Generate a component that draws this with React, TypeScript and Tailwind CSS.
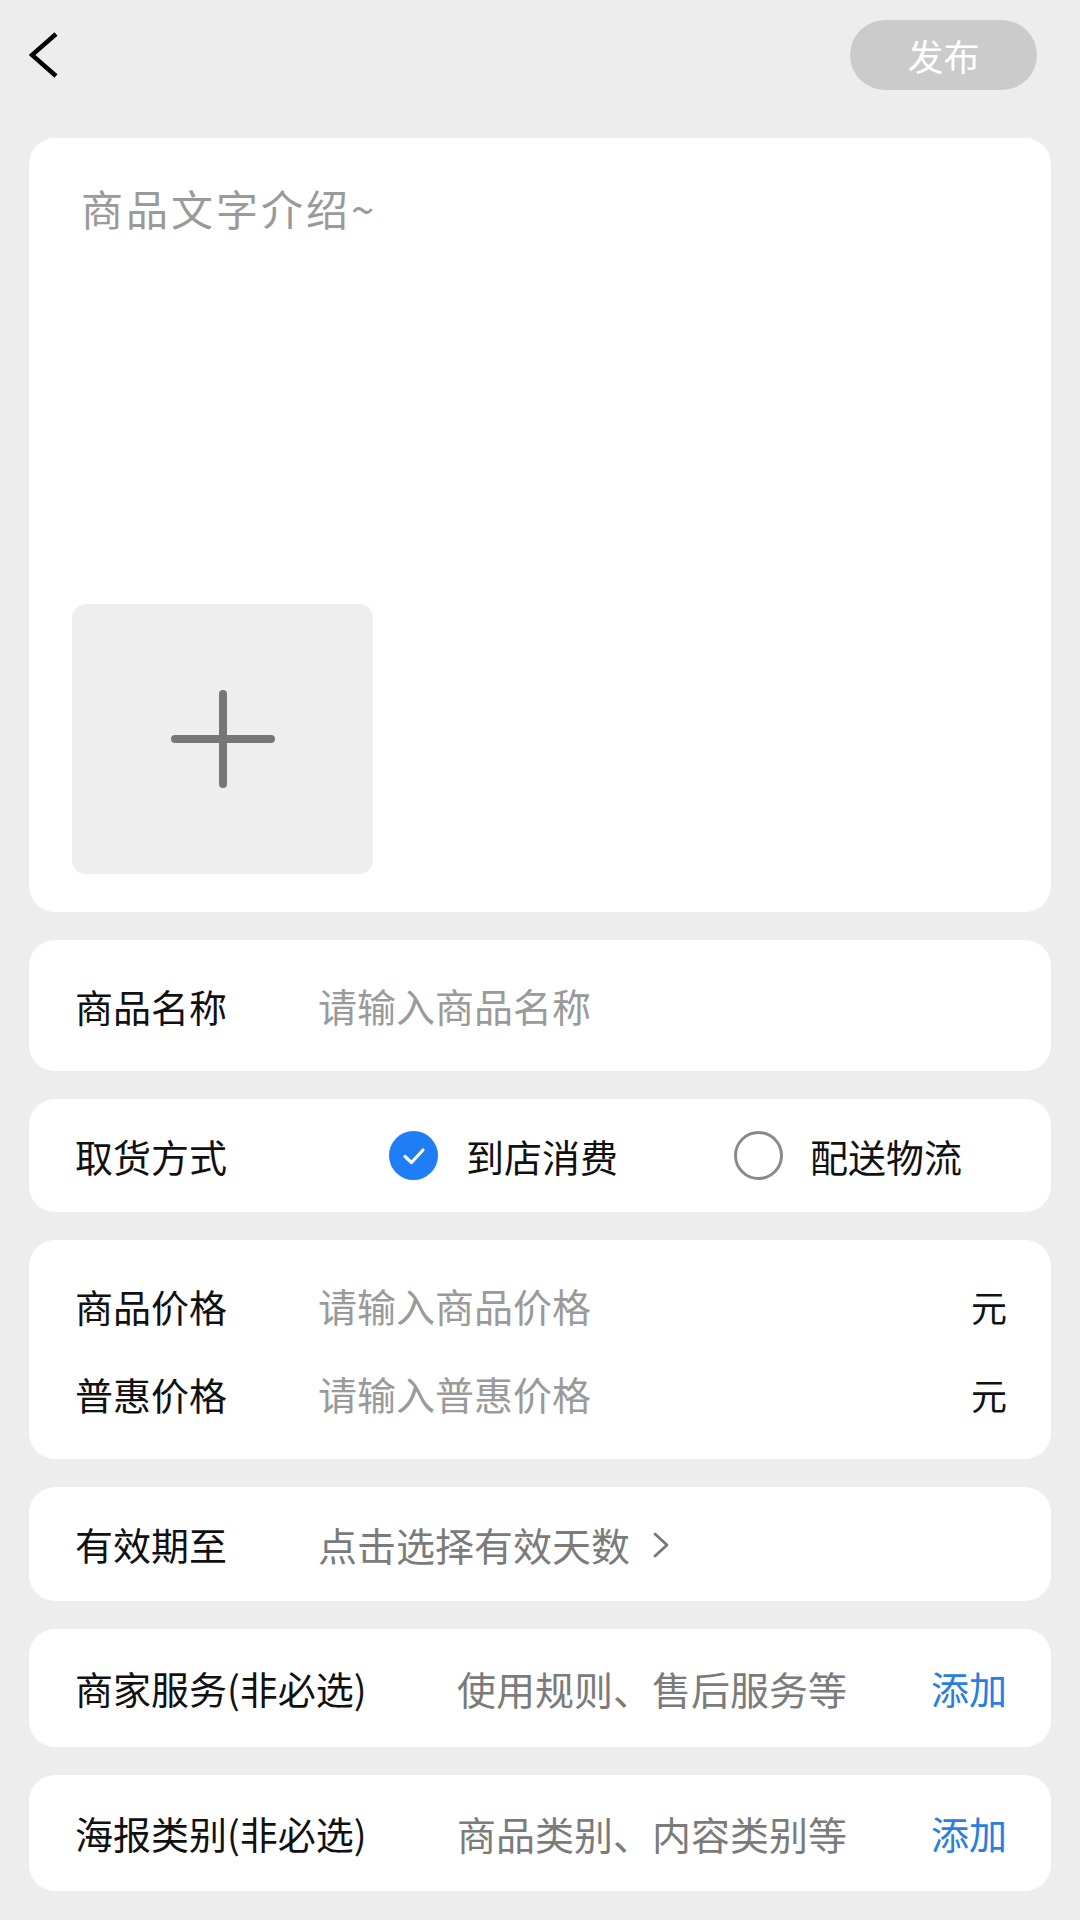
import type { ReactNode } from 'react';

const font = { fontFamily: '"Noto Sans CJK SC", "Noto Sans", sans-serif' };

function Card({ h, className = '', children }: { h: string; className?: string; children: ReactNode }) {
  return (
    <div className={`mx-[29px] rounded-[26px] bg-white pl-[46px] pr-[44px] ${h} ${className}`}>
      {children}
    </div>
  );
}

function Label({ w, children }: { w: string; children: ReactNode }) {
  return <div className={`${w} shrink-0 text-[38px] leading-none text-[#111]`}>{children}</div>;
}

function BackIcon() {
  return (
    <svg width="30" height="46" viewBox="0 0 30 46" fill="none">
      <path d="M27 2 L3 23 L27 44" stroke="#000" strokeWidth="4.5" strokeLinejoin="miter" />
    </svg>
  );
}

function ChevronRight() {
  return (
    <svg width="18" height="26" viewBox="0 0 18 26" fill="none">
      <path d="M3 2 L15 13 L3 24" stroke="#777" strokeWidth="2.8" strokeLinecap="round" strokeLinejoin="round" />
    </svg>
  );
}

function PlusIcon() {
  return (
    <svg width="108" height="98" viewBox="0 0 108 98" fill="none">
      <path d="M6 49 H102 M54 4 V94" stroke="#777" strokeWidth="8" strokeLinecap="round" />
    </svg>
  );
}

function Checked() {
  return (
    <div className="flex h-[49px] w-[49px] shrink-0 items-center justify-center rounded-full bg-[#1f7ef5]">
      <svg width="26" height="22" viewBox="0 0 26 22" fill="none">
        <path d="M4 11.5 L10.5 17.5 L22 5" stroke="#fff" strokeWidth="3.2" strokeLinecap="round" strokeLinejoin="round" />
      </svg>
    </div>
  );
}

function Unchecked() {
  return <div className="h-[49px] w-[49px] shrink-0 rounded-full border-[3px] border-[#8a8a8a]" />;
}

export default function App() {
  return (
    <div className="min-h-[1920px] w-[1080px] bg-[#ededed] pb-[27px]" style={font}>
      {/* header */}
      <div className="flex h-[90px] items-center justify-between pl-[29px] pr-[43px] pt-[20px]">
        <BackIcon />
        <button className="flex h-[70px] w-[187px] items-center justify-center rounded-full bg-[#cbcbcb] text-[36px] leading-none text-white">
          发布
        </button>
      </div>

      <div className="mt-[48px] flex flex-col gap-[28px]">
        {/* description + image */}
        <div className="mx-[29px] flex h-[774px] flex-col justify-between rounded-[26px] bg-white pb-[38px] pl-[43px] pt-[49px]">
          <div className="ml-[9px] text-[42px] leading-none tracking-[3px] text-[#9a9a9a]">商品文字介绍~</div>
          <div className="flex h-[270px] w-[301px] items-center justify-center rounded-[14px] bg-[#eeeeee]">
            <PlusIcon />
          </div>
        </div>

        <Card h="h-[131px]" className="flex items-center">
          <Label w="w-[243px]">商品名称</Label>
          <div className="text-[39px] leading-none text-[#9a9a9a]">请输入商品名称</div>
        </Card>

        <Card h="h-[113px]" className="flex items-center">
          <Label w="w-[314px]">取货方式</Label>
          <Checked />
          <div className="ml-[28px] text-[38px] leading-none text-[#111]">到店消费</div>
          <div className="ml-[116px]">
            <Unchecked />
          </div>
          <div className="ml-[27px] text-[38px] leading-none text-[#111]">配送物流</div>
        </Card>

        <Card h="h-[219px]" className="flex flex-col justify-center gap-[44px]">
          <div className="flex h-[44px] items-center">
            <Label w="w-[243px]">商品价格</Label>
            <div className="flex-1 text-[39px] leading-none text-[#9a9a9a]">请输入商品价格</div>
            <div className="text-[36px] leading-none text-[#111]">元</div>
          </div>
          <div className="flex h-[44px] items-center">
            <Label w="w-[243px]">普惠价格</Label>
            <div className="flex-1 text-[39px] leading-none text-[#9a9a9a]">请输入普惠价格</div>
            <div className="text-[36px] leading-none text-[#111]">元</div>
          </div>
        </Card>

        <Card h="h-[114px]" className="flex items-center">
          <Label w="w-[243px]">有效期至</Label>
          <div className="text-[39px] leading-none text-[#7b7b7b]">点击选择有效天数</div>
          <div className="ml-[22px] mt-[2px]">
            <ChevronRight />
          </div>
        </Card>

        <Card h="h-[118px]" className="flex items-center">
          <Label w="w-[382px]">商家服务(非必选)</Label>
          <div className="flex-1 text-[39px] leading-none text-[#7b7b7b]">使用规则、售后服务等</div>
          <div className="text-[38px] leading-none text-[#2a7de1]">添加</div>
        </Card>

        <Card h="h-[116px]" className="flex items-center">
          <Label w="w-[382px]">海报类别(非必选)</Label>
          <div className="flex-1 text-[39px] leading-none text-[#7b7b7b]">商品类别、内容类别等</div>
          <div className="text-[38px] leading-none text-[#2a7de1]">添加</div>
        </Card>
      </div>
    </div>
  );
}
